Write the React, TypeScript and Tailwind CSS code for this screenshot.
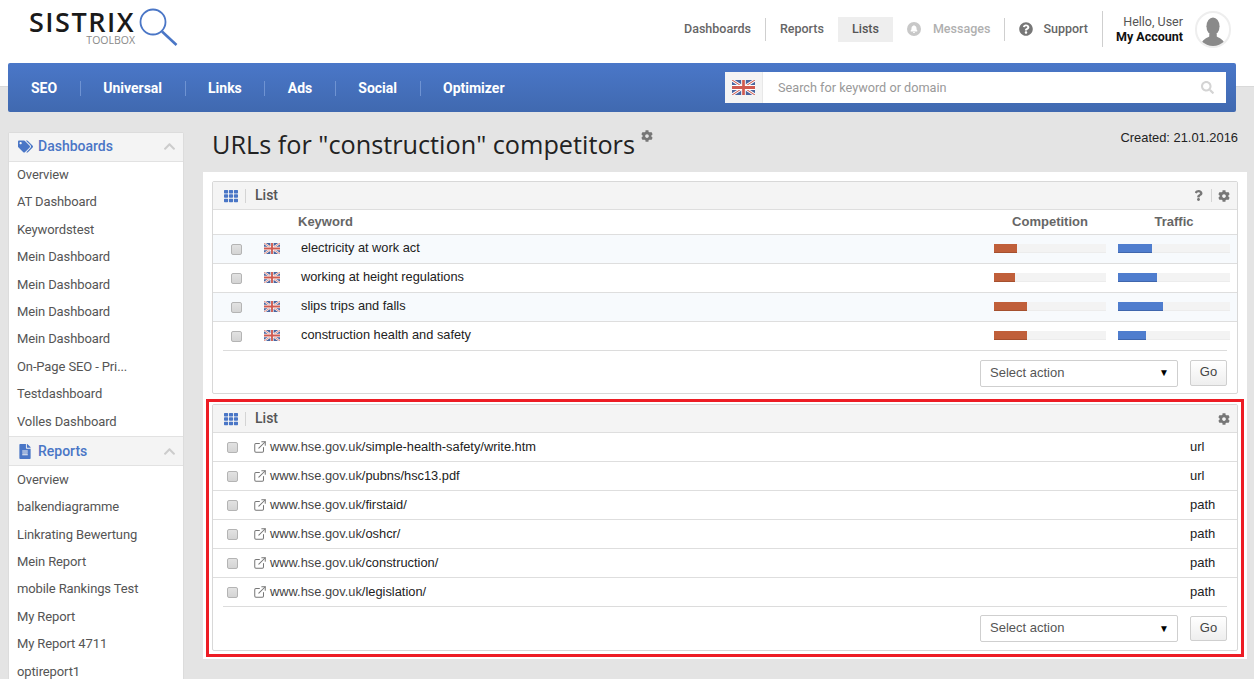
import { ExternalLink } from "lucide-react";
import { FaBell, FaChevronUp, FaCog, FaFileAlt, FaQuestion, FaQuestionCircle, FaSearch, FaTags, FaTh } from "react-icons/fa";

const dashboards = ["Overview", "AT Dashboard", "Keywordstest", "Mein Dashboard", "Mein Dashboard", "Mein Dashboard", "Mein Dashboard", "On-Page SEO - Pri...", "Testdashboard", "Volles Dashboard"];
const reports = ["Overview", "balkendiagramme", "Linkrating Bewertung", "Mein Report", "mobile Rankings Test", "My Report", "My Report 4711", "optireport1"];
const navItems = ["SEO", "Universal", "Links", "Ads", "Social", "Optimizer"];

const keywords = [
  { name: "electricity at work act", competition: 23, traffic: 34 },
  { name: "working at height regulations", competition: 21, traffic: 39 },
  { name: "slips trips and falls", competition: 33, traffic: 45 },
  { name: "construction health and safety", competition: 33, traffic: 28 },
];

const urls = [
  { host: "www.hse.gov.uk", path: "/simple-health-safety/write.htm", type: "url" },
  { host: "www.hse.gov.uk", path: "/pubns/hsc13.pdf", type: "url" },
  { host: "www.hse.gov.uk", path: "/firstaid/", type: "path" },
  { host: "www.hse.gov.uk", path: "/oshcr/", type: "path" },
  { host: "www.hse.gov.uk", path: "/construction/", type: "path" },
  { host: "www.hse.gov.uk", path: "/legislation/", type: "path" },
];

function Flag({ className }: { className: string }) {
  return (
    <svg viewBox="0 0 60 36" className={className} preserveAspectRatio="none">
      <rect width="60" height="36" fill="#4a659f" />
      <path d="M0 0L60 36M60 0L0 36" stroke="#fff" strokeWidth="7" />
      <path d="M0 0L60 36M60 0L0 36" stroke="#cf5a50" strokeWidth="2.5" />
      <path d="M30 0V36M0 18H60" stroke="#fff" strokeWidth="12" />
      <path d="M30 0V36M0 18H60" stroke="#cf5a50" strokeWidth="7" />
    </svg>
  );
}

function Checkbox() {
  return <span className="block w-[11px] h-[11px] rounded-[2px] border border-[#b4b4b4] bg-gradient-to-b from-[#e2e2e2] to-[#d4d4d4]" />;
}

function Bar({ width, color }: { width: number; color: string }) {
  return (
    <div className="w-[112px] h-[9px] mb-[1px] bg-[#f3f3f3] border-b border-[#ececec]">
      <div className={`h-[9px] border-b ${color}`} style={{ width }} />
    </div>
  );
}

function BoxHeader({ help }: { help?: boolean }) {
  return (
    <div className="flex items-center h-[28px] bg-[#f4f4f4] border-b border-[#dedede]">
      <FaTh className="ml-[11px] w-[14px] h-[14px] text-[#4a76c6]" />
      <span className="ml-[7px] h-[14px] border-l border-[#d4d4d4]" />
      <span className="ml-[9px] font-['Roboto',sans-serif] font-medium text-[14px] text-[#555]">List</span>
      <div className="ml-auto mr-[7px] flex items-center text-[#777]">
        {help && (
          <>
            <FaQuestion className="w-[9px] h-[11px]" />
            <span className="ml-[8px] mr-[6px] h-[13px] border-l border-[#d4d4d4]" />
          </>
        )}
        <FaCog className="w-[12px] h-[12px]" />
      </div>
    </div>
  );
}

function BoxFooter({ tight }: { tight?: boolean }) {
  return (
    <div className={`mx-[10px] border-t border-[#dcdcdc] flex justify-end items-start text-[13px] ${tight ? "pt-[8px]" : "pt-[9px]"}`}>
      <div className={`w-[198px] h-[27px] border border-[#cfcfcf] rounded-[2px] bg-white flex items-center pl-[9px] pr-[8px] text-[#555] ${tight ? "pb-[1px]" : "pb-[2px]"}`}>
        <span>Select action</span>
        <span className="ml-auto text-[10px] text-black">▼</span>
      </div>
      <div className={`ml-[12px] w-[37px] border border-[#cfcfcf] rounded-[2px] bg-gradient-to-b from-white to-[#eeeeee] flex items-center justify-center pb-[2px] text-[#444] ${tight ? "mt-[1px] h-[25px]" : "h-[26px]"}`}>Go</div>
    </div>
  );
}

function SideSection({ title, icon, items, first }: { title: string; icon: React.ReactNode; items: string[]; first?: boolean }) {
  return (
    <div>
      <div className={`flex items-center bg-[#f4f4f4] border-b border-[#e2e2e2] pl-[9px] pr-[7px] ${first ? "h-[29px] pb-[1px]" : "h-[30px] border-t pt-[1px]"}`}>
        {icon}
        <span className="font-medium text-[14px] text-[#4a76c6]">{title}</span>
        <FaChevronUp className="ml-auto w-[13px] h-[13px] text-[#cccccc]" />
      </div>
      {items.map((item, i) => (
        <div key={i} className={`h-[27.4px] pl-[8px] text-[13px] tracking-[-0.12px] text-[#555] whitespace-nowrap ${first ? "leading-[25px]" : "leading-[27px]"}`}>{item}</div>
      ))}
    </div>
  );
}

export default function App() {
  return (
    <div className="h-[679px] overflow-hidden bg-[#e4e4e4] font-['Liberation_Sans',Arial,sans-serif] text-[12px]">
      {/* top header */}
      <header className="h-[87px] bg-white border-b border-[#d9d9d9] flex items-start font-['Roboto',sans-serif]">
        <div className="ml-[29px] mt-[8px] flex items-start">
          <div className="flex flex-col items-end">
            <span className="font-['Open_Sans',sans-serif] font-semibold text-[27px] leading-[22px] mt-[3px] tracking-[1.5px] text-[#1a1a1a]">SISTRIX</span>
            <span className="font-['Open_Sans',sans-serif] text-[10.5px] leading-[11px] mt-[2px] text-[#8a8a8a]">TOOLBOX</span>
          </div>
          <svg width="40" height="40" viewBox="0 0 40 40" className="ml-[3px] -mt-[1px]">
            <circle cx="15" cy="15" r="12.5" fill="none" stroke="#4a76c6" strokeWidth="1.8" />
            <path d="M24 24.5L38.5 38" stroke="#4a76c6" strokeWidth="2.6" />
          </svg>
        </div>

        <div className="ml-auto mr-[23px] mt-[10px] flex items-center h-[38px] text-[12.5px] font-medium text-[#666]">
          <span>Dashboards</span>
          <span className="ml-[14px] h-[23px] border-l border-[#cfcfcf]" />
          <span className="ml-[14px]">Reports</span>
          <span className="ml-[14px] px-[14px] h-[25px] leading-[24px] bg-[#eeeeee] text-[#555]">Lists</span>
          <span className="ml-[14px] flex items-center justify-center w-[14px] h-[14px] rounded-full bg-[#c8c8c8]">
            <FaBell className="w-[8px] h-[8px] text-white" />
          </span>
          <span className="ml-[12px] text-[#b0b0b0]">Messages</span>
          <span className="ml-[14px] h-[23px] border-l border-[#cfcfcf]" />
          <FaQuestionCircle className="ml-[14px] w-[14px] h-[14px] text-[#777]" />
          <span className="ml-[10px]">Support</span>
          <span className="ml-[14px] h-[36px] border-l border-[#cfcfcf]" />
          <div className="ml-[13px] flex flex-col items-end leading-[15px]">
            <span className="font-normal text-[#555]">Hello, User</span>
            <span className="font-bold text-[#111]">My Account</span>
          </div>
          <div className="ml-[12px] w-[36px] h-[37px] rounded-full border-[2px] border-[#eeeeee] overflow-hidden flex items-end justify-center">
            <svg viewBox="0 0 32 33" className="w-[30px] h-[31px]">
              <ellipse cx="16" cy="12" rx="7" ry="9.5" fill="#8a8a8a" />
              <path d="M12 20h8v3c3 2 8 3 9 10H3c1-7 6-8 9-10z" fill="#8a8a8a" />
            </svg>
          </div>
        </div>
      </header>

      {/* blue nav */}
      <nav className="relative -mt-[24px] mx-[8px] w-[1228px] h-[49px] rounded-[2px] bg-gradient-to-b from-[#4a77c8] to-[#4069b0] flex items-center font-['Roboto',sans-serif]">
        <div className="flex items-center pl-[23px] pt-[1px]">
          {navItems.map((item, i) => (
            <div key={item} className="flex items-center">
              <span className="font-bold text-[14px] text-white">{item}</span>
              {i < navItems.length - 1 && <span className="mx-[22.5px] h-[15px] border-l border-[#6f93d2]" />}
            </div>
          ))}
        </div>
        <div className="ml-auto mr-[10px] w-[501px] h-[31px] bg-white flex items-center">
          <div className="w-[38px] h-[31px] bg-[#f4f4f4] border-r border-[#e8e8e8] flex items-center justify-center">
            <Flag className="w-[23px] h-[15px]" />
          </div>
          <span className="ml-[15px] text-[12.7px] text-[#999]">Search for keyword or domain</span>
          <FaSearch className="ml-auto mr-[12px] w-[13px] h-[13px] text-[#d4d4d4]" />
        </div>
      </nav>

      <div className="flex items-start mt-[20px]">
        {/* sidebar */}
        <aside className="ml-[8px] w-[176px] shrink-0 bg-white border border-[#dcdcdc] rounded-[2px] font-['Roboto',sans-serif]">
          <SideSection first title="Dashboards" icon={<FaTags className="w-[15px] h-[13px] mr-[5px] text-[#4a76c6]" />} items={dashboards} />
          <SideSection title="Reports" icon={<FaFileAlt className="w-[12px] h-[15px] mr-[7px] ml-[1px] text-[#4a76c6]" />} items={reports} />
        </aside>

        {/* main */}
        <main className="ml-[19px] w-[1044px] -mt-[20px]">
          <div className="h-[60px] flex items-start">
            <h1 className="ml-[9px] mt-[16px] font-['Open_Sans',sans-serif] text-[25.25px] leading-[32px] text-[#222] whitespace-nowrap">URLs for "construction" competitors</h1>
            <FaCog className="ml-[6px] mt-[18px] w-[12px] h-[12px] text-[#777]" />
            <span className="ml-auto mr-[9px] mt-[16px] text-[12.9px] text-[#222]">Created: 21.01.2016</span>
          </div>

          <div className="bg-white p-[9px] pb-[8px]">
            {/* keyword list */}
            <section className="h-[213px] border border-[#d8d8d8] rounded-[2px]">
              <BoxHeader help />
              <div className="flex items-center h-[25px] border-b border-[#dedede] font-bold text-[13px] text-[#666]">
                <span className="ml-[85px]">Keyword</span>
                <span className="ml-auto w-[112px] text-center mr-[12px]">Competition</span>
                <span className="w-[112px] text-center mr-[7px]">Traffic</span>
              </div>
              {keywords.map((row, i) => (
                <div key={row.name} className={`flex items-center ${i < keywords.length - 1 ? "h-[29px] border-b border-[#dedede]" : "h-[28px]"} ${i % 2 === 0 ? "bg-[#f7fafd]" : "bg-white"}`}>
                  <span className="ml-[18px]"><Checkbox /></span>
                  <Flag className="ml-[22px] mb-[1px] w-[16px] h-[11px]" />
                  <span className="ml-[21px] pb-[2px] text-[12.8px] text-[#222]">{row.name}</span>
                  <div className="ml-auto mr-[12px]"><Bar width={row.competition} color="bg-[#c05f3a] border-[#a5502f]" /></div>
                  <div className="mr-[7px]"><Bar width={row.traffic} color="bg-[#4f7dce] border-[#3f66ad]" /></div>
                </div>
              ))}
              <BoxFooter />
            </section>

            {/* url list, highlighted */}
            <section className="relative mt-[10px] h-[247px] border border-[#d8d8d8] rounded-[2px]">
              <BoxHeader />
              {urls.map((row, i) => (
                <div key={row.path} className={`flex items-center ${i < urls.length - 1 ? "h-[29px] border-b border-[#dedede]" : "h-[28px]"}`}>
                  <span className="ml-[14px]"><Checkbox /></span>
                  <ExternalLink className="ml-[15px] w-[14px] h-[14px] text-[#777]" strokeWidth={1.75} />
                  <span className="ml-[3px] text-[12.85px] text-[#222]">
                    <span className="text-[#444]">{row.host}</span>{row.path}
                  </span>
                  <span className="ml-auto w-[47px] text-[13px] text-[#222]">{row.type}</span>
                </div>
              ))}
              <BoxFooter tight />
              <div className="absolute -left-[7px] -right-[7px] -top-[6px] -bottom-[7px] border-[3px] border-[#ed1c24] pointer-events-none" />
            </section>
          </div>
        </main>
      </div>
    </div>
  );
}
